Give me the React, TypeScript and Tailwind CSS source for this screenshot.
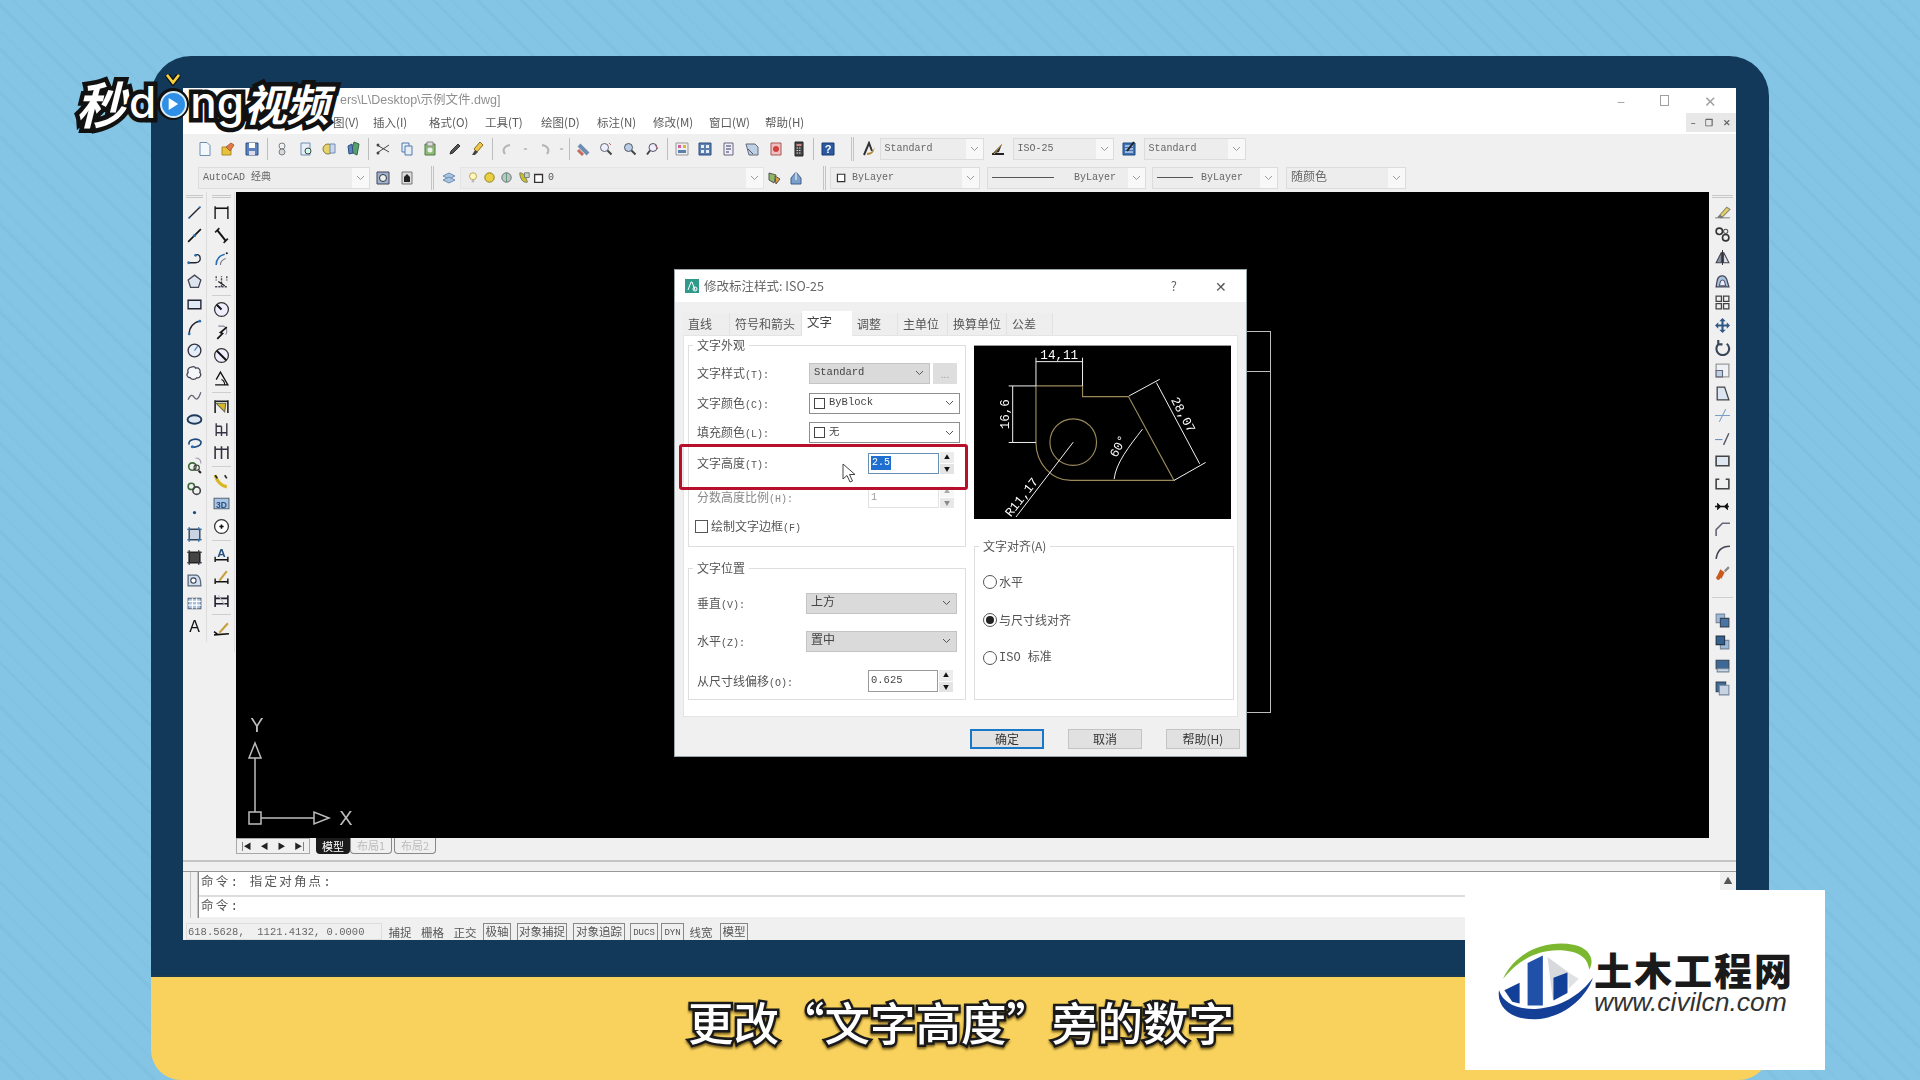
import React from "react";

const C = { b: "#3f6ea8", d: "#3a4a5c", g: "#8a8f96", y: "#e8c23a", r: "#c94a3a", l: "#cfe0f2", t: "#2f8f9f" };

const ICONS: Record<string, React.ReactNode> = {
  new: <path d="M3 1.5h7l3 3v10H3z" fill="#f4f8fc" stroke="#6f8db3" />,
  open: <><path d="M2 6h9v8H2z" fill={C.y} stroke="#a98c2a" /><path d="M6 6l5-4 3 2-4 6z" fill="#e07a4a" stroke="#b06030" /></>,
  save: <><path d="M2 2h12v12H2z" fill="#5b82bd" stroke="#2f4f80" /><path d="M5 2h6v5H5z" fill="#fff" /><path d="M5 10h6v4H5z" fill="#dde" /></>,
  plot: <><circle cx="8" cy="5" r="3" fill="none" stroke="#7a7f88" /><circle cx="8" cy="11" r="3" fill="#d8d8d8" stroke="#7a7f88" /></>,
  prev: <><path d="M3 2h9v12H3z" fill="#e8eef6" stroke="#6f8db3" /><circle cx="10" cy="10" r="3" fill="#cfe" stroke="#444" /></>,
  pub: <><circle cx="7" cy="8" r="5" fill="#e6d36a" stroke="#8a7a3a" /><path d="M9 3h5v9H9z" fill="#cfd8ea" stroke="#6f8db3" /></>,
  d3: <><path d="M9 1l5 2-2 11-6-3z" fill="#5aa06a" stroke="#2e6a42" /><path d="M3 5l4-2 1 9-4 1z" fill="#5b82bd" stroke="#2f4f80" /></>,
  cut: <><path d="M2 4l12 7M2 12l12-8" stroke="#444" fill="none" /><circle cx="3" cy="4" r="1.5" fill="#444" /><circle cx="3" cy="12" r="1.5" fill="#444" /></>,
  copy: <><path d="M3 2h7v9H3z" fill="#e6eef8" stroke="#4f79ac" /><path d="M6 5h7v9H6z" fill="#e6eef8" stroke="#4f79ac" /></>,
  paste: <><path d="M3 3h10v11H3z" fill="#8dbb7a" stroke="#557a45" /><path d="M5 1h6v4H5z" fill="#ddd" stroke="#888" /><circle cx="8" cy="9" r="2.5" fill="#eee" /></>,
  brush: <path d="M12 3l2 2-7 7-3 1 1-3z" fill="#555" stroke="#333" />,
  match: <><path d="M11 1l3 3-6 7-3-3z" fill="#eec64a" stroke="#8a7020" /><path d="M3 14l3-5 3 2-3 3z" fill="#444" /></>,
  undo: <path d="M5 13c-3-4-1-8 5-9" fill="none" stroke="#b5b5b5" strokeWidth="2" />,
  redo: <path d="M11 13c3-4 1-8-5-9" fill="none" stroke="#b5b5b5" strokeWidth="2" />,
  drop: <path d="M6 8h4" stroke="#aaa" strokeWidth="1.5" />,
  pan: <><path d="M4 4l9 9" stroke="#6f8db3" strokeWidth="4" /><path d="M3 9l5 5" stroke="#c86a5a" strokeWidth="3" /></>,
  zm1: <><circle cx="6.5" cy="6.5" r="4" fill="#eef" stroke="#667" /><path d="M9.5 9.5l4 4" stroke="#444" strokeWidth="2" /><path d="M11 2l2 2" stroke="#c55" /></>,
  zm2: <><circle cx="6.5" cy="6.5" r="4" fill="#b8cde6" stroke="#556" /><path d="M9.5 9.5l4 4" stroke="#444" strokeWidth="2" /></>,
  zm3: <><circle cx="8" cy="6.5" r="4" fill="#eef" stroke="#556" /><path d="M5 9.5l-3 4" stroke="#444" strokeWidth="2" /><path d="M10 4l3 4" stroke="#c55" /></>,
  prop: <><path d="M2 2h12v12H2z" fill="#eee" stroke="#999" /><path d="M4 4h3v3H4z" fill="#d060a0" /><path d="M9 4h3v3H9z" fill="#e0b030" /><path d="M4 9h8v3H4z" fill="#5a80b0" /></>,
  grid: <><path d="M2 2h12v12H2z" fill="#5a7fb0" stroke="#2f4f80" /><path d="M4 4h3v3H4zM9 4h3v3H9zM4 9h3v3H4zM9 9h3v3H9z" fill="#e8eef6" /></>,
  tool: <><path d="M3 2h9v12H3z" fill="#eef" stroke="#667" /><path d="M5 5h5M5 8h5M5 11h3" stroke="#335" /></>,
  mark: <><path d="M2 3h9l3 3v8H5z" fill="#bcd0e6" stroke="#667" /><path d="M4 8l5 5" stroke="#555" /></>,
  sheet: <><path d="M3 2h10v12H3z" fill="#f0c0c0" stroke="#a55" /><circle cx="8" cy="8" r="3" fill="#d04040" /></>,
  calc: <><path d="M4 1h8v14H4z" fill="#444" stroke="#222" /><path d="M5.5 3h5v2h-5z" fill="#c88" /><path d="M5.5 7h5M5.5 9.5h5M5.5 12h5" stroke="#ddd" strokeDasharray="1.5 1" /></>,
  help: <><path d="M2 2h12v12H2z" fill="#2c5aa0" stroke="#173a70" /><text x="8" y="12" textAnchor="middle" fontSize="11" fontWeight="700" fill="#fff" fontFamily="Liberation Sans">?</text></>,
  astyle: <><path d="M3 14L8 2l3 8" fill="none" stroke="#333" strokeWidth="2" /><path d="M6 12c4 0 7-3 8-6-1 5-3 8-8 8z" fill="#b08a30" /></>,
  dstyle: <><path d="M2 13h12" stroke="#222" strokeWidth="2" /><path d="M2 13L12 3l-3 8z" fill="#333" /><path d="M4 13l8-10" stroke="#c9a040" /></>,
  tstyle: <><path d="M2 2h12v12H2z" fill="#3f72b8" stroke="#1f4a80" /><path d="M4 5h8M4 8h8M4 11h8" stroke="#fff" /><path d="M13 1L6 10" stroke="#222" strokeWidth="2" /></>,
  ws: <><path d="M2 2h12v12H2z" fill="#9db4d0" stroke="#445" /><circle cx="8" cy="8" r="3.5" fill="#eee" stroke="#333" /></>,
  ws2: <><path d="M3 2h10v12H3z" fill="#ddd" stroke="#777" /><path d="M8 4l3 3v5H5V7z" fill="#222" /></>,
  layers: <><path d="M8 3l6 3-6 3-6-3z" fill="#a8c4e0" stroke="#6f8db3" /><path d="M8 7l6 3-6 3-6-3z" fill="#a8c4e0" stroke="#6f8db3" /></>,
  bulb: <><circle cx="8" cy="6" r="4" fill="#fff7c0" stroke="#b0a040" /><path d="M6.5 10h3v3h-3z" fill="#bbb" /></>,
  sun: <circle cx="8" cy="8" r="5" fill="#e8d040" stroke="#8a7a10" />,
  lock: <><circle cx="8" cy="8" r="5" fill="#b8c8c0" stroke="#667" /><path d="M8 3v10" stroke="#5a9a70" /></>,
  lay2: <><path d="M3 3c4 0 7 4 8 10-5 1-8-4-8-10z" fill="#c8c020" stroke="#777" /><path d="M8 3h5v5H8z" fill="#c0d8c0" stroke="#777" /></>,
  box: <path d="M3 4h9v9H3z" fill="#fff" stroke="#333" strokeWidth="1.5" />,
  lay3: <><path d="M3 3l7 2-2 8-5-3z" fill="#8cb860" stroke="#555" /><path d="M9 6l5 3-4 5z" fill="#e0a040" stroke="#555" /></>,
  lay4: <><path d="M8 2l5 6v6H3V8z" fill="#7ba0cc" stroke="#3f5f8a" /><path d="M8 2v8" stroke="#fff" /></>,
  line: <><path d="M3 13L13 3" stroke="#223" strokeWidth="1.3" /><circle cx="3" cy="13" r="1" fill="#2a6fb0" /><circle cx="13" cy="3" r="1" fill="#2a6fb0" /></>,
  xline: <><path d="M2 14L14 2" stroke="#111" strokeWidth="1.5" /><circle cx="8" cy="8" r="1.5" fill="#2a6fb0" /></>,
  pline: <><path d="M2 12h7c4 0 5-3 4-6-1-2-3-2-4-1" fill="none" stroke="#223" strokeWidth="1.3" /><circle cx="2.5" cy="12" r="1.3" fill="#2a6fb0" /><circle cx="9" cy="5" r="1.3" fill="#2a6fb0" /></>,
  poly: <path d="M8 2l6 4.5-2.3 7H4.3L2 6.500z" fill="#dde6f0" stroke="#445" strokeWidth="1.2" />,
  rect: <path d="M2 4h12v8H2z" fill="#e0eaf5" stroke="#223" strokeWidth="1.3" />,
  arc: <><path d="M3 14C3 8 7 3 13 2" fill="none" stroke="#223" strokeWidth="1.3" /><circle cx="3" cy="14" r="1.3" fill="#2a6fb0" /><circle cx="13" cy="2" r="1.3" fill="#2a6fb0" /></>,
  circle: <><circle cx="8" cy="8" r="6" fill="#e6eef6" stroke="#334" strokeWidth="1.3" /><path d="M8 8l3-4" stroke="#2a6fb0" /></>,
  cloud: <path d="M5 2c2-1 4 0 4 1 3-1 5 2 4 4 2 2 0 6-3 5-1 2-5 2-6 0-3 0-4-3-2-5-1-3 1-5 3-5z" fill="#f4f6fa" stroke="#445" strokeWidth="1.2" />,
  spline: <path d="M2 11c2-5 4-5 6-2s4 1 6-5" fill="none" stroke="#667" strokeWidth="1.2" />,
  ell: <ellipse cx="8" cy="8" rx="6.500" ry="4" fill="#dce6f2" stroke="#1e3a5a" strokeWidth="1.800" />,
  ellarc: <><path d="M3 10C1 5 11 3 14 7c1 4-5 6-8 5" fill="none" stroke="#1e4a80" strokeWidth="1.500" /><circle cx="6" cy="12" r="1.500" fill="#2a6fb0" /></>,
  ins: <><path d="M9 1c3 0 5 2 5 5" fill="none" stroke="#99a" /><circle cx="6" cy="9" r="3.500" fill="none" stroke="#3a6a3a" strokeWidth="1.500" /><circle cx="10" cy="10" r="2.500" fill="none" stroke="#333" /><path d="M12 13l2 2" stroke="#222" strokeWidth="2" /></>,
  blk: <><circle cx="5" cy="6" r="3" fill="none" stroke="#3a6a3a" strokeWidth="1.500" /><circle cx="10" cy="10" r="3.500" fill="none" stroke="#444" strokeWidth="1.500" /></>,
  point: <circle cx="8" cy="9" r="1.500" fill="#1e4a80" />,
  hatch: <><path d="M3 3h10v10H3z" fill="#c8d4e4" stroke="#345" strokeWidth="1.300" /><path d="M1 3h3M3 1v3M12 1v3M12 3h3M1 13h3M3 12v3M12 12v3M12 13h3" stroke="#2a6fb0" /></>,
  grad: <><path d="M3 3h10v10H3z" fill="#444" stroke="#222" strokeWidth="1.500" /><path d="M1 3h3M3 1v3M12 1v3M12 3h3M1 13h3M3 12v3M12 12v3M12 13h3" stroke="#334" /></>,
  region: <><path d="M2 3h8c3 1 4 5 4 10H2z" fill="#d4e0f0" stroke="#567" strokeWidth="1.200" /><circle cx="7" cy="8" r="2.500" fill="#fff" stroke="#345" /></>,
  table: <><path d="M2 3h12v10H2z" fill="#a8c0e0" stroke="#567" /><path d="M2 6h12M2 9.500h12M6 3v10M10 3v10" stroke="#fff" /></>,
  A: <text x="8" y="13.5" textAnchor="middle" fontSize="15" fill="#111" fontFamily="Liberation Sans">A</text>,
  dlin: <><path d="M2 2v12M14 2v12" stroke="#333" strokeWidth="1.500" /><path d="M2 4h12" stroke="#111" strokeWidth="1.500" /></>,
  dali: <><path d="M2 5L6 1M10 15l4-4" stroke="#222" strokeWidth="1.500" /><path d="M4 3l8 10" stroke="#111" strokeWidth="1.800" /></>,
  darc: <><path d="M3 14C3 8 7 5 11 4" fill="none" stroke="#2a6fb0" strokeWidth="1.500" /><path d="M7 14C7 11 9 9 12 8" fill="none" stroke="#778" /><circle cx="13" cy="3" r="1" fill="#222" /></>,
  dord: <><path d="M2 13h12M8 13V3M3 3v4M13 3v4" stroke="#445" strokeDasharray="2 1" strokeWidth="1.300" /><path d="M5 8l6 4" stroke="#111" /></>,
  drad: <><circle cx="8" cy="8" r="6.500" fill="#eef" stroke="#333" strokeWidth="1.200" /><path d="M3.500 3.500L8 8" stroke="#111" strokeWidth="1.800" /></>,
  djog: <><path d="M5 2h5c3 1 4 5 2 8" fill="none" stroke="#889" /><path d="M13 3L7 8l2 1-5 5" fill="none" stroke="#111" strokeWidth="1.600" /></>,
  ddia: <><circle cx="8" cy="8" r="6.500" fill="#eef" stroke="#333" strokeWidth="1.200" /><path d="M3.500 3.500l9 9" stroke="#111" strokeWidth="1.800" /></>,
  dang: <><path d="M2 14h12L7 2 3 9" fill="none" stroke="#111" strokeWidth="1.200" /><path d="M11 14c0-3-1-4-3-5" fill="none" stroke="#111" /></>,
  dq: <><path d="M2 2v12M14 2v12M2 3h12" stroke="#222" strokeWidth="1.500" /><path d="M3 5l9 0-1 8z" fill="#d8b820" stroke="#665" /></>,
  dbas: <><path d="M3 2v12M8 5v9M13 2v12M3 5h5M3 11h10" stroke="#334" strokeWidth="1.300" /></>,
  dcon: <><path d="M2 2v12M8 2v12M14 2v12M2 5h12" stroke="#334" strokeWidth="1.500" /></>,
  lead: <><path d="M2 3c2 6 6 10 11 11" fill="none" stroke="#d8b820" strokeWidth="3" /><path d="M2 3l2 3M11 3l2 3" stroke="#222" strokeWidth="1.500" /></>,
  tol: <><path d="M1 3h14v10H1z" fill="#a9c4e4" stroke="#567" /><text x="8" y="12" textAnchor="middle" fontSize="8" fontWeight="700" fill="#24507f" fontFamily="Liberation Sans">3D</text></>,
  cen: <><circle cx="8" cy="8" r="6.500" fill="#fff" stroke="#333" strokeWidth="1.200" /><path d="M6 8h4M8 6v4" stroke="#111" strokeWidth="1.500" /></>,
  dted: <><path d="M2 13h12M2 10v5M14 10v5" stroke="#111" strokeWidth="1.300" /><text x="8" y="10" textAnchor="middle" fontSize="11" fontWeight="700" fill="#24507f" fontFamily="Liberation Sans">A</text></>,
  dup: <><path d="M2 12h12M2 9v5M14 9v5" stroke="#111" strokeWidth="1.300" /><path d="M6 11l7-9" stroke="#c9a040" strokeWidth="2" /></>,
  dupd: <><path d="M2 3v11M14 3v11M2 6h12M2 11h12" stroke="#223" strokeWidth="1.500" /><path d="M5 3l6 9" stroke="#bbb" /></>,
  dsty: <><path d="M1 11l4 3M1 14l14-1" stroke="#111" strokeWidth="1.500" /><path d="M6 12l8-9" stroke="#c9a040" strokeWidth="2" /></>,
  erase: <><path d="M1 13h14" stroke="#888" /><path d="M4 12l8-9 3 2-8 8z" fill="#e6d060" stroke="#887" /><path d="M3 13l3-3 3 3z" fill="#777" /></>,
  rcopy: <><circle cx="5" cy="5" r="3" fill="none" stroke="#333" strokeWidth="1.500" /><circle cx="11" cy="11" r="3" fill="none" stroke="#333" strokeWidth="1.500" /><circle cx="11" cy="5" r="2" fill="none" stroke="#555" /></>,
  mir: <><path d="M8 1v14" stroke="#333" /><path d="M7 3v10H2z" fill="#8895a5" stroke="#445" /><path d="M9 3v10h5z" fill="#dfe4ea" stroke="#445" /></>,
  off: <><path d="M2 14l1-6c1-5 7-6 9-1l2 7z" fill="#a9c4e0" stroke="#445" strokeWidth="1.200" /><path d="M5 13l1-4c1-2 3-2 4 0l1 4z" fill="#eef" stroke="#556" /></>,
  arr: <path d="M2 2h5v5H2zM9 2h5v5H9zM2 9h5v5H2zM9 9h5v5H9z" fill="#f0f0f4" stroke="#444" strokeWidth="1.200" />,
  mov: <path d="M8 1l3 3H9v3h3V5l3 3-3 3V9H9v3h2l-3 3-3-3h2V9H4v2L1 8l3-3v2h3V4H5z" fill="#2f5a86" />,
  rot: <path d="M4 5a6 6 0 1 0 8-.500M4 1v4h4" fill="none" stroke="#384858" strokeWidth="2" />,
  sca: <><path d="M2 2h12v12H2z" fill="#eef2f6" stroke="#999" strokeWidth="1.200" /><path d="M2 8h6v6H2z" fill="#bcd0e6" stroke="#667" /></>,
  str: <path d="M3 2h7l4 12H3z" fill="#dbe6f2" stroke="#444" strokeWidth="1.200" />,
  trim: <><path d="M1 8h14" stroke="#7a9ec4" /><path d="M5 14l6-12" stroke="#7a9ec4" /></>,
  ext: <><path d="M1 9h7" stroke="#6f8db3" /><path d="M9 14l5-11" stroke="#556" strokeWidth="1.300" /></>,
  brk: <path d="M2 4h12v9H2z" fill="#dfe8f2" stroke="#444" strokeWidth="1.500" />,
  brk2: <path d="M5 4H2v9h12V4h-3" fill="none" stroke="#444" strokeWidth="1.500" />,
  join: <><path d="M1 8h13" stroke="#111" strokeWidth="1.500" /><path d="M3 5l3 3-3 3M13 5l-3 3 3 3" fill="#111" stroke="#111" /></>,
  cham: <path d="M15 3H8L2 9v6" fill="none" stroke="#667" strokeWidth="1.500" />,
  fil: <path d="M15 3C8 3 3 7 2 15" fill="none" stroke="#445" strokeWidth="1.500" />,
  expl: <><path d="M6 4l4 3-3 6-4-3z" fill="#c85a20" /><circle cx="4" cy="12" r="2" fill="#c85a20" /><path d="M10 6l4-4" stroke="#888" strokeWidth="2" /></>,
  o1: <><path d="M2 2h8v8H2z" fill="#9db8d8" stroke="#789" /><path d="M6 6h8v8H6z" fill="#4a74a6" stroke="#345" /></>,
  o2: <><path d="M6 6h8v8H6z" fill="#9db8d8" stroke="#789" /><path d="M2 2h8v8H2z" fill="#34608f" stroke="#234" /></>,
  o3: <><path d="M2 3h12v8H2z" fill="#3e6896" stroke="#345" /><path d="M3 11h11v3H3z" fill="#cdd8e6" stroke="#789" /></>,
  o4: <><path d="M2 2h9v9H2z" fill="#3e6896" stroke="#345" /><path d="M5 5h9v9H5z" fill="#c5d3e3" stroke="#789" /></>,
};

function Ic({ n, w = 23.5, h = 16 }: { n: string; w?: number; h?: number }) {
  return (
    <span className="flex shrink-0 items-center justify-center" style={{ width: w }}>
      <svg width={h} height={h} viewBox="0 0 16 16" strokeWidth="1">{ICONS[n]}</svg>
    </span>
  );
}

const Sep = ({ w = 7 }: { w?: number }) => (
  <span className="flex h-full shrink-0 items-center justify-center" style={{ width: w }}>
    <span className="h-[22px] w-px bg-[#bdbdbd]" />
  </span>
);

const Grip = ({ w = 19 }: { w?: number }) => (
  <span className="flex h-full shrink-0 items-center justify-end gap-px pr-1" style={{ width: w }}>
    <span className="h-[24px] w-px bg-[#c4c4c4]" />
    <span className="h-[24px] w-px bg-[#c4c4c4]" />
  </span>
);

const Chev = ({ c = "#9a9a9a" }: { c?: string }) => (
  <svg width="9" height="6" viewBox="0 0 9 6" className="shrink-0"><path d="M1 1l3.500 3.500L8 1" fill="none" stroke={c} /></svg>
);

function TbSelect({ w, children, ml = 0 }: { w: number; children: React.ReactNode; ml?: number }) {
  return (
    <span className="flex h-[22px] shrink-0 items-center border border-[#dcdcdc] bg-[#ededed] font-['Liberation_Mono','Noto_Sans_CJK_SC',monospace] text-[10px] text-[#666]" style={{ width: w, marginLeft: ml }}>
      <span className="flex min-w-0 flex-1 items-center gap-1 overflow-hidden whitespace-nowrap pl-1">{children}</span>
      <span className="flex h-full w-[17px] shrink-0 items-center justify-center bg-[#f8f8f8]"><Chev /></span>
    </span>
  );
}

const MENU = ["插入(I)", "格式(O)", "工具(T)", "绘图(D)", "标注(N)", "修改(M)", "窗口(W)", "帮助(H)"];

function TitleAndMenu() {
  return (
    <>
      <div className="relative flex h-[23px] items-center bg-white pl-[157px] pt-px text-[12.500px] text-[#8f8f8f]">
        <span className="font-['Liberation_Sans','Noto_Sans_CJK_SC',sans-serif]">ers\L\Desktop\示例文件.dwg]</span>
        <div className="ml-auto flex items-center gap-[35px] pr-[19px] text-[15px] leading-none text-[#a0a0a0]">
          <span>–</span>
          <span className="block h-[11px] w-[9px] border border-[#a0a0a0]" />
          <span>✕</span>
        </div>
      </div>
      <div className="flex h-[23px] items-center bg-white pl-[150px] text-[11.500px] text-[#5a5a5a]">
        <span className="w-[40px] whitespace-nowrap">图(V)</span>
        {MENU.map((m) => <span key={m} className="w-[56px] shrink-0 whitespace-nowrap">{m}</span>)}
        <div className="ml-auto flex h-[19px] w-[50px] items-center justify-around bg-[#e8e8e8] text-[9px] font-bold text-[#666]">
          <span>–</span><span>❐</span><span>✕</span>
        </div>
      </div>
    </>
  );
}

function Toolbar1() {
  return (
    <div className="flex h-[29px] items-center bg-[#f0f0f0] pl-[10px]">
      {["new", "open", "save"].map((n) => <Ic key={n} n={n} />)}
      <Sep />
      {["plot", "prev", "pub", "d3"].map((n) => <Ic key={n} n={n} />)}
      <Sep />
      {["cut", "copy", "paste", "brush", "match"].map((n) => <Ic key={n} n={n} />)}
      <Sep />
      <Ic n="undo" w={23} /><Ic n="drop" w={13} /><Ic n="redo" w={23} /><Ic n="drop" w={13} />
      <Sep w={3} />
      {["pan", "zm1", "zm2", "zm3"].map((n) => <Ic key={n} n={n} />)}
      <Sep w={5} />
      {["prop", "grid", "tool", "mark", "sheet", "calc"].map((n) => <Ic key={n} n={n} />)}
      <Sep w={5} />
      <Ic n="help" />
      <Grip w={18} />
      <Ic n="astyle" w={22} />
      <TbSelect w={104}>Standard</TbSelect>
      <Ic n="dstyle" w={29} />
      <TbSelect w={101}>ISO-25</TbSelect>
      <Ic n="tstyle" w={30} />
      <TbSelect w={102}>Standard</TbSelect>
    </div>
  );
}

function Toolbar2() {
  return (
    <div className="flex h-[29px] items-center bg-[#f0f0f0] pl-[15px]">
      <TbSelect w={172}>AutoCAD 经典</TbSelect>
      <Ic n="ws" w={26} /><Ic n="ws2" w={22} />
      <Grip w={20} />
      <Ic n="layers" w={22} />
      <span className="flex h-[22px] w-[304px] shrink-0 items-center border border-[#e4e4e4] bg-[#ededed] pl-[5px] text-[10px] text-[#555]">
        <svg width="14" height="14" viewBox="0 0 16 16">{ICONS.bulb}</svg>
        <span className="ml-[2px]"><svg width="15" height="15" viewBox="0 0 16 16">{ICONS.sun}</svg></span>
        <span className="ml-[2px]"><svg width="15" height="15" viewBox="0 0 16 16">{ICONS.lock}</svg></span>
        <span className="ml-[3px]"><svg width="15" height="15" viewBox="0 0 16 16">{ICONS.lay2}</svg></span>
        <svg width="14" height="14" viewBox="0 0 16 16">{ICONS.box}</svg>
        <span className="ml-[2px] font-['Liberation_Mono',monospace]">0</span>
        <span className="ml-auto flex h-full w-[17px] items-center justify-center bg-[#f8f8f8]"><Chev /></span>
      </span>
      <Ic n="lay3" w={20} /><Ic n="lay4" w={24} />
      <Grip w={22} />
      <TbSelect w={150}><svg width="13" height="13" viewBox="0 0 16 16">{ICONS.box}</svg>ByLayer</TbSelect>
      <TbSelect w={159} ml={7}><span className="h-px w-[62px] shrink-0 bg-[#555]" /><span className="ml-4">ByLayer</span></TbSelect>
      <TbSelect w={126} ml={6}><span className="h-px w-[36px] shrink-0 bg-[#555]" /><span className="ml-1">ByLayer</span></TbSelect>
      <TbSelect w={120} ml={8}><span className="text-[12px]">随颜色</span></TbSelect>
    </div>
  );
}

const GRIPBAR = <div className="mx-[3px] mt-[3px] h-[3px] border-y border-[#c8c8c8]" />;

function VStack({ groups, h, sep, className }: { groups: string[][]; h: number; sep: number; className: string }) {
  return (
    <div className={className}>
      {GRIPBAR}
      <div className="mt-[3px] flex flex-col">
        {groups.map((g, i) => (
          <React.Fragment key={i}>
            {i > 0 && <div className="flex items-center px-[3px]" style={{ height: sep }}><div className="h-px w-full bg-[#cfcfcf]" /></div>}
            {g.map((n, j) => (
              <div key={j} className="flex items-center justify-center" style={{ height: h }}>
                <svg width="17" height="17" viewBox="0 0 16 16" strokeWidth="1">{ICONS[n]}</svg>
              </div>
            ))}
          </React.Fragment>
        ))}
      </div>
    </div>
  );
}

const Lbl = ({ t, k, w, c = "#555" }: { t: string; k: string; w: number; c?: string }) => (
  <span className="shrink-0 whitespace-nowrap text-[12px]" style={{ width: w, color: c }}>
    {t}<span className="font-['Liberation_Mono',monospace] text-[10px]">{k}</span>
  </span>
);

function DSelect({ w, children, dis }: { w: number; children: React.ReactNode; dis?: boolean }) {
  return (
    <span
      className={dis
        ? "flex h-[21px] shrink-0 items-center border border-[#c4c4c4] bg-[#dadada] pl-1 pr-[5px] text-[11px] text-[#444]"
        : "flex h-[21px] shrink-0 items-center border border-[#8f8f8f] bg-white pl-1 pr-[5px] text-[11px] text-[#444]"}
      style={{ width: w }}
    >
      <span className="flex flex-1 items-center gap-1 whitespace-nowrap font-['Liberation_Mono','Noto_Sans_CJK_SC',monospace] text-[10.500px]">{children}</span>
      <Chev c="#555" />
    </span>
  );
}

const Spin = ({ dim }: { dim?: boolean }) => (
  <span className="ml-px flex h-[22px] w-[14px] shrink-0 flex-col gap-px">
    <span className={dim ? "flex flex-1 items-center justify-center bg-[#f6f6f6] text-[6px] leading-none text-[#aaa]" : "flex flex-1 items-center justify-center bg-[#ececec] text-[6px] leading-none text-[#111]"}>▲</span>
    <span className={dim ? "flex flex-1 items-center justify-center bg-[#e8e8e8] text-[6px] leading-none text-[#888]" : "flex flex-1 items-center justify-center bg-[#e4e4e4] text-[6px] leading-none text-[#111]"}>▼</span>
  </span>
);

function Group({ title, className, children }: { title: string; className: string; children: React.ReactNode }) {
  return (
    <div className={"relative border border-[#dedede] " + className}>
      <span className="absolute left-[4px] top-[-9px] bg-white px-1 text-[12px] leading-[16px] text-[#555]">{title}</span>
      {children}
    </div>
  );
}

const Radio = ({ on }: { on?: boolean }) => (
  <span className="flex h-[14px] w-[14px] shrink-0 items-center justify-center rounded-full border border-[#555] bg-white">
    {on && <span className="block h-[8px] w-[8px] rounded-full bg-[#222]" />}
  </span>
);

function Preview() {
  const t = { fill: "#fff", fontFamily: "Liberation Mono", fontSize: 38 };
  return (
    <div className="h-[174px] w-[257px] border-t border-[#999] bg-black">
      <svg width="257" height="173" viewBox="45 258 770 520">
        <g fill="none" stroke="#9a8a5a" strokeWidth="3.500">
          <path d="M230 378H370V410H508L645 662H335A105 114 0 0 1 230 548Z" />
          <circle cx="342" cy="547" r="70" />
        </g>
        <g fill="none" stroke="#f2f2f2" strokeWidth="3">
          <path d="M230 378V293M370 378V293M230 305H370" />
          <path d="M148 378H230M148 548H230M160 378V548" />
          <path d="M510 408L602 358M645 662L740 608M592 368L722 612" />
          <path d="M465 658C470 610 510 560 550 508" />
          <path d="M342 547L170 772" />
        </g>
        <text x="300" y="298" textAnchor="middle" {...t}>14,11</text>
        <text transform="translate(150 463) rotate(-90)" textAnchor="middle" {...t}>16,6</text>
        <text transform="translate(662 470) rotate(62)" textAnchor="middle" {...t}>28,07</text>
        <text transform="translate(488 565) rotate(-62)" textAnchor="middle" {...t}>60°</text>
        <text transform="translate(196 720) rotate(-52)" textAnchor="middle" {...t}>R11,17</text>
      </svg>
    </div>
  );
}

const TABS: [string, number, boolean?][] = [["直线", 47], ["符号和箭头", 72], ["文字", 50, true], ["调整", 46], ["主单位", 50], ["换算单位", 59], ["公差", 46]];

function Dialog() {
  return (
    <div className="absolute left-[439px] top-[78px] flex h-[486px] w-[571px] flex-col bg-[#f0f0f0] text-[#555] shadow-[0_0_0_1px_#9aa7aa]">
      <div className="flex h-[32px] items-center bg-white pl-[10px] pr-[19px]">
        <svg width="14" height="14" viewBox="0 0 14 14"><path d="M0 0h14v14H0z" fill="#2f9a8a" /><path d="M3 11L6 3h1l3 8" fill="none" stroke="#fff" /><circle cx="10" cy="10" r="2" fill="none" stroke="#fff" /></svg>
        <span className="ml-[5px] text-[12.500px] text-[#666]">修改标注样式: ISO-25</span>
        <span className="ml-auto mr-[4px] text-[13px] text-[#666]">?</span>
        <span className="ml-[34px] text-[14px] leading-none text-[#555]">✕</span>
      </div>
      <div className="mt-[11px] flex h-[22px] pl-[8px]">
        {TABS.map(([t, w, on]) => (
          <span
            key={t}
            className={on
              ? "relative z-10 -mt-[2px] flex h-[25px] items-start bg-white pl-[5px] pt-[2px] text-[12.500px] text-[#444]"
              : "flex h-full items-center justify-start whitespace-nowrap border-r border-[#e2e2e2] bg-[#eeeeee] pl-[5px] text-[12px] text-[#555]"}
            style={{ width: w }}
          >{t}</span>
        ))}
      </div>
      <div className="mx-[8px] flex h-[382px] gap-[8px] border border-[#e4e4e4] bg-white pl-[4px] pt-[9px]">
        <div className="flex w-[278px] flex-col gap-[21px]">
          <Group title="文字外观" className="h-[202px] pl-[8px] pt-[12px]">
            <div className="flex h-[30px] items-center">
              <Lbl t="文字样式" k="(T):" w={112} />
              <DSelect w={121} dis>Standard</DSelect>
              <span className="ml-[3px] flex h-[21px] w-[24px] items-center justify-center bg-[#dedede] text-[10px] text-[#999]">...</span>
            </div>
            <div className="flex h-[30px] items-center">
              <Lbl t="文字颜色" k="(C):" w={112} />
              <DSelect w={151}><span className="h-[11px] w-[11px] border border-[#444]" />ByBlock</DSelect>
            </div>
            <div className="flex h-[29px] items-center">
              <Lbl t="填充颜色" k="(L):" w={112} />
              <DSelect w={151}><span className="h-[11px] w-[11px] border border-[#444]" />无</DSelect>
            </div>
            <div className="flex h-[32px] items-center">
              <Lbl t="文字高度" k="(T):" w={171} />
              <span className="flex h-[21px] w-[71px] items-center border border-[#6a8fb5] bg-white pl-[2px]">
                <span className="bg-[#1f6fd0] px-px font-['Liberation_Mono',monospace] text-[10px] leading-[14px] text-white">2.5</span>
              </span>
              <Spin />
            </div>
            <div className="flex h-[36px] items-center">
              <Lbl t="分数高度比例" k="(H):" w={171} c="#888" />
              <span className="flex h-[21px] w-[71px] items-center border border-[#e2e2e2] bg-white pl-[2px] font-['Liberation_Mono',monospace] text-[10px] text-[#999]">1</span>
              <Spin dim />
            </div>
            <div className="-ml-[2px] flex h-[22px] items-center gap-[3px]">
              <span className="h-[13px] w-[13px] border border-[#555] bg-white" />
              <Lbl t="绘制文字边框" k="(F)" w={120} />
            </div>
          </Group>
          <Group title="文字位置" className="h-[132px] pl-[8px] pt-[15px]">
            <div className="flex h-[38px] items-center">
              <Lbl t="垂直" k="(V):" w={109} />
              <DSelect w={151} dis><span className="text-[12px]">上方</span></DSelect>
            </div>
            <div className="flex h-[38px] items-center">
              <Lbl t="水平" k="(Z):" w={109} />
              <DSelect w={151} dis><span className="text-[12px]">置中</span></DSelect>
            </div>
            <div className="mt-[2px] flex h-[38px] items-center">
              <Lbl t="从尺寸线偏移" k="(O):" w={171} />
              <span className="flex h-[22px] w-[70px] items-center border border-[#9a9a9a] bg-white pl-[2px] font-['Liberation_Mono',monospace] text-[10.500px] text-[#444]">0.625</span>
              <Spin />
            </div>
          </Group>
        </div>
        <div className="flex w-[260px] flex-col gap-[27px]">
          <Preview />
          <Group title="文字对齐(A)" className="h-[154px] pl-[8px] pt-[16px]">
            <div className="flex h-[38px] items-center gap-[2px] text-[12px]"><Radio /><span>水平</span></div>
            <div className="flex h-[38px] items-center gap-[2px] text-[12px]"><Radio on /><span>与尺寸线对齐</span></div>
            <div className="flex h-[38px] items-center gap-[2px] text-[12px]"><Radio /><span className="font-['Liberation_Mono','Noto_Sans_CJK_SC',monospace]">ISO 标准</span></div>
          </Group>
        </div>
      </div>
      <div className="mt-[12px] flex justify-end gap-[24px] pr-[6px] text-[12px]">
        <span className="flex h-[20px] w-[74px] items-center justify-center border-2 border-[#1a78c8] bg-[#e1e1e1] text-[#333]">确定</span>
        <span className="flex h-[20px] w-[74px] items-center justify-center border border-[#c4c4c4] bg-[#e1e1e1] text-[#333]">取消</span>
        <span className="flex h-[20px] w-[74px] items-center justify-center border border-[#c4c4c4] bg-[#e1e1e1] text-[#333]">帮助(H)</span>
      </div>
      <div className="absolute left-[4px] top-[174px] h-[46px] w-[289px] rounded-[3px] border-[3px] border-[#b80f2a]" />
      <svg className="absolute left-[167px] top-[193px]" width="14" height="21" viewBox="0 0 14 21">
        <path d="M1 1v15l4-3.500 3 6.500 2.500-1-3-6.500H13z" fill="#fff" stroke="#444" />
      </svg>
    </div>
  );
}

function Canvas() {
  return (
    <div className="relative flex-1 bg-black">
      <div className="absolute left-[860px] top-[139px] h-[382px] w-[175px] border border-[#bdbdbd]">
        <div className="mt-[39px] h-px bg-[#bdbdbd]" />
      </div>
      <svg className="absolute left-0 top-[520px]" width="130" height="126" viewBox="0 0 130 126" fill="none" stroke="#bdbdbd" strokeWidth="1.500">
        <path d="M13 100h12v12H13zM19 100V46M25 106h53" />
        <path d="M19 31l-6 15h12zM78 100v12l15-6z" />
        <text x="21" y="20" fontSize="20" textAnchor="middle" fill="#bdbdbd" stroke="none" fontFamily="Liberation Sans">Y</text>
        <text x="110" y="113" fontSize="20" textAnchor="middle" fill="#bdbdbd" stroke="none" fontFamily="Liberation Sans">X</text>
      </svg>
      <Dialog />
    </div>
  );
}

function TabsRow() {
  return (
    <div className="flex h-[24px] border-b-2 border-[#c4c4c4] bg-[#f0f0f0] pl-[53px]">
      <div className="flex h-[16px] w-[74px] items-center justify-around border border-[#a8a8a8] text-[8px] text-[#222]">
        <span>|◀</span><span>◀</span><span>▶</span><span>▶|</span>
      </div>
      <div className="ml-[6px] flex h-[16px] w-[34px] items-center justify-center rounded-b-[4px] bg-[#1b1b1b] text-[11px] text-white">模型</div>
      <div className="flex h-[16px] w-[42px] items-center justify-center rounded-b-[4px] border-x border-b border-[#888] text-[11px] text-[#bbb]">布局1</div>
      <div className="ml-[2px] flex h-[16px] w-[42px] items-center justify-center rounded-b-[4px] border-x border-b border-[#888] text-[11px] text-[#bbb]">布局2</div>
    </div>
  );
}

function CommandLine() {
  return (
    <div className="mt-[9px] flex h-[47px] border-t border-[#999] bg-[#f0f0f0] pl-[7px]">
      <div className="w-[8px] border-x border-[#c4c4c4]" />
      <div className="flex flex-1 flex-col border-l border-[#888] font-['Liberation_Mono','Noto_Sans_CJK_SC',monospace] text-[12.500px] tracking-[2.200px] text-[#555]">
        <div className="flex h-[23px] items-center bg-white pl-[2px]">命令: 指定对角点:</div>
        <div className="flex h-[22px] items-center border-t-2 border-[#ddd] bg-white pl-[2px]">命令:</div>
      </div>
      <div className="flex w-[16px] justify-center pt-[4px] text-[9px] leading-none text-[#555]">▲</div>
    </div>
  );
}

const STATUS: [string, number, number, boolean][] = [
  ["捕捉", 24, 9, false], ["栅格", 23, 8, false], ["正交", 26, 5, false], ["极轴", 28, 6, true], ["对象捕捉", 50, 6, true],
  ["对象追踪", 52, 5, true], ["DUCS", 28, 3, true], ["DYN", 23, 6, true], ["线宽", 22, 8, false], ["模型", 28, 0, true],
];

function StatusBar() {
  return (
    <div className="mt-[5px] flex h-[17px] overflow-hidden bg-[#f0f0f0] pl-[3px]">
      <div className="flex h-[17px] w-[196px] items-start border border-[#ddd] pl-px pt-px font-['Liberation_Mono',monospace] text-[10.500px] text-[#666]">618.5628,&nbsp;&nbsp;1121.4132,&nbsp;0.0000</div>
      <div className="ml-[6px] flex">
        {STATUS.map(([t, w, m, box]) => (
          <span
            key={t}
            className={box
              ? "flex h-[20px] items-start justify-center whitespace-nowrap border-x border-t border-[#888] pt-px font-['Liberation_Mono','Noto_Sans_CJK_SC',monospace] text-[11.500px] leading-[16px] text-[#555]"
              : "flex h-[20px] items-start justify-center whitespace-nowrap pt-px text-[11.500px] leading-[16px] text-[#555]"}
            style={{ width: w, marginRight: m }}
          >{t === "DUCS" || t === "DYN" ? <span className="text-[9px]">{t}</span> : t}</span>
        ))}
      </div>
    </div>
  );
}

function BrandLogo() {
  const stroke = "[-webkit-text-stroke:9px_#111] [paint-order:stroke_fill]";
  return (
    <div className={"absolute left-[76px] top-[67px] flex h-[70px] items-center whitespace-nowrap leading-none text-white " + stroke}>
      <span className="font-['Noto_Sans_CJK_SC',sans-serif] text-[50px] font-bold italic tracking-[-1px]">秒</span>
      <span className="ml-[4px] font-['Inter',sans-serif] text-[44px] font-medium">d</span>
      <span className="relative mx-[1px] mt-[4px] flex h-[32px] w-[32px] shrink-0 items-center justify-center rounded-full bg-[#111]">
        <span className="flex h-[27px] w-[27px] items-center justify-center rounded-full border-2 border-[#d8ecfb] bg-[#2f8fe6]">
          <svg width="12" height="14" viewBox="0 0 14 16"><path d="M2 1l11 7-11 7z" fill="#fff" /></svg>
        </span>
        <svg className="absolute -top-[14px] left-[8px]" width="16" height="12" viewBox="0 0 18 14"><path d="M2 1l7 9 7-9" fill="none" stroke="#111" strokeWidth="6" /><path d="M2 1l7 9 7-9" fill="none" stroke="#f7d23e" strokeWidth="3" /></svg>
      </span>
      <span className="font-['Inter',sans-serif] text-[44px] font-medium">ng</span>
      <span className="font-['Noto_Sans_CJK_SC',sans-serif] text-[43px] font-bold italic tracking-[-1px]">视频</span>
    </div>
  );
}

function Watermark() {
  return (
    <div className="absolute left-[1465px] top-[890px] flex h-[180px] w-[360px] items-center bg-white pl-[32px]">
      <svg width="98" height="78" viewBox="170 180 295 235" className="mt-[4px] shrink-0">
        <path d="M188 288C225 205 320 170 400 185c50 10 65 45 48 75-5-35-30-55-85-58-70-4-130 30-175 86z" fill="#7cb82f" />
        <path d="M322 222l62 45v60l-46 25z" fill="#d7d9dc" />
        <path d="M384 268l32 20-30 30z" fill="#dfe1e4" />
        <path d="M192 322l46-22v62l-22-5z" fill="#123f97" />
        <path d="M262 240l46-22v150l-46 0z" fill="#2150a8" />
        <path d="M340 285l42-16v62l-42 22z" fill="#123f97" />
        <path d="M176 322c-8 50 35 90 110 88 80-3 150-60 173-125-40 55-100 88-165 93-60 4-105-15-118-56z" fill="#143f96" />
      </svg>
      <div className="-ml-px mt-[4px] flex flex-col items-start">
        <span className="whitespace-nowrap font-['Noto_Sans_CJK_SC',sans-serif] text-[38px] font-black leading-[40px] tracking-[2px] text-[#1a1a1a]">土木工程网</span>
        <span className="whitespace-nowrap font-['Liberation_Sans',sans-serif] text-[26.500px] italic leading-[26px] text-[#333]">www.civilcn.com</span>
      </div>
    </div>
  );
}

export default function App() {
  return (
    <div className="relative h-[1080px] w-[1920px] overflow-hidden bg-[#84c5e5] bg-[repeating-linear-gradient(45deg,#84c5e5_0px,#84c5e5_14px,#7ebfdf_16px,#84c5e5_19px,#84c5e5_27px,#81c2e2_29px,#84c5e5_31px)] font-['Noto_Sans_CJK_SC',sans-serif]">
      <div className="ml-[151px] mt-[56px] h-[919px] w-[1618px] rounded-t-[40px] bg-[#12395a] pl-[32px] pr-[33px] pt-[32px]">
        <div className="flex h-[852px] flex-col overflow-hidden bg-[#f0f0f0] blur-[0.4px]">
          <TitleAndMenu />
          <Toolbar1 />
          <Toolbar2 />
          <div className="flex h-[646px]">
            <div className="flex w-[53px] shrink-0 gap-[2px]">
              <VStack
                className="h-[450px] w-[24px] border-r border-[#ddd]"
                h={23}
                sep={0}
                groups={[["line", "xline", "pline", "poly", "rect", "arc", "circle", "cloud", "spline", "ell", "ellarc", "ins", "blk", "point", "hatch", "grad", "region", "table", "A"]]}
              />
              <VStack
                className="h-[460px] w-[26px] border-r border-[#ddd]"
                h={23}
                sep={5}
                groups={[["dlin", "dali", "darc", "dord"], ["drad", "djog", "ddia", "dang"], ["dq", "dbas", "dcon"], ["lead", "tol", "cen"], ["dted", "dup", "dupd"], ["dsty"]]}
              />
            </div>
            <Canvas />
            <VStack
              className="h-[510px] w-[27px] shrink-0"
              h={22.6}
              sep={24}
              groups={[["erase", "rcopy", "mir", "off", "arr", "mov", "rot", "sca", "str", "trim", "ext", "brk", "brk2", "join", "cham", "fil", "expl"], ["o1", "o2", "o3", "o4"]]}
            />
          </div>
          <TabsRow />
          <CommandLine />
          <StatusBar />
        </div>
      </div>
      <div className="ml-[151px] flex h-[105px] w-[1618px] items-center justify-center rounded-b-[30px] border-t-2 border-[#1d3a55] bg-[#f8d25c] pb-[14px] pl-[2px]">
        <span className="whitespace-nowrap text-[45.500px] font-medium leading-none text-white [-webkit-text-stroke:5px_#1a1a1a] [paint-order:stroke_fill] drop-shadow-[0_2px_1px_#7a6020]">更改“文字高度”旁的数字</span>
      </div>
      <BrandLogo />
      <Watermark />
    </div>
  );
}
